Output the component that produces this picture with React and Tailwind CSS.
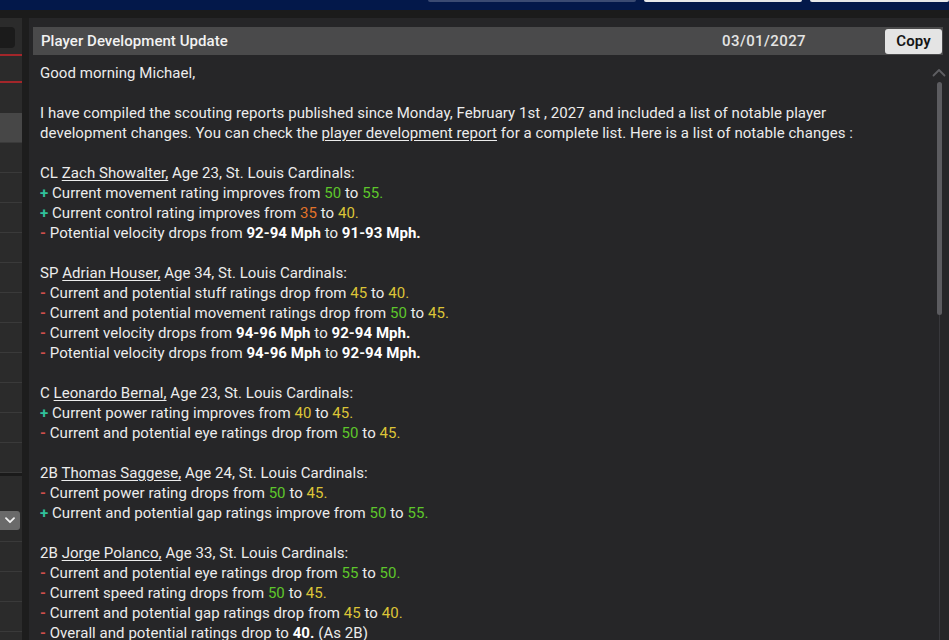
import React from "react";

const tone = {
  g: "text-[#5ec62b]",
  y: "text-[#dcc437]",
  o: "text-[#e2732a]",
};

const reports = [
  {
    pos: "CL",
    name: "Zach Showalter,",
    rest: " Age 23, St. Louis Cardinals:",
    lines: [
      { s: "+", t: "Current movement rating improves from", a: ["50", "g"], b: ["55.", "g"] },
      { s: "+", t: "Current control rating improves from", a: ["35", "o"], b: ["40.", "y"] },
      { s: "-", t: "Potential velocity drops from", bold: ["92-94 Mph", "91-93 Mph."] },
    ],
  },
  {
    pos: "SP",
    name: "Adrian Houser,",
    rest: " Age 34, St. Louis Cardinals:",
    lines: [
      { s: "-", t: "Current and potential stuff ratings drop from", a: ["45", "y"], b: ["40.", "y"] },
      { s: "-", t: "Current and potential movement ratings drop from", a: ["50", "g"], b: ["45.", "y"] },
      { s: "-", t: "Current velocity drops from", bold: ["94-96 Mph", "92-94 Mph."] },
      { s: "-", t: "Potential velocity drops from", bold: ["94-96 Mph", "92-94 Mph."] },
    ],
  },
  {
    pos: "C",
    name: "Leonardo Bernal,",
    rest: " Age 23, St. Louis Cardinals:",
    lines: [
      { s: "+", t: "Current power rating improves from", a: ["40", "y"], b: ["45.", "y"] },
      { s: "-", t: "Current and potential eye ratings drop from", a: ["50", "g"], b: ["45.", "y"] },
    ],
  },
  {
    pos: "2B",
    name: "Thomas Saggese,",
    rest: " Age 24, St. Louis Cardinals:",
    lines: [
      { s: "-", t: "Current power rating drops from", a: ["50", "g"], b: ["45.", "y"] },
      { s: "+", t: "Current and potential gap ratings improve from", a: ["50", "g"], b: ["55.", "g"] },
    ],
  },
  {
    pos: "2B",
    name: "Jorge Polanco,",
    rest: " Age 33, St. Louis Cardinals:",
    lines: [
      { s: "-", t: "Current and potential eye ratings drop from", a: ["55", "g"], b: ["50.", "g"] },
      { s: "-", t: "Current speed rating drops from", a: ["50", "g"], b: ["45.", "y"] },
      { s: "-", t: "Current and potential gap ratings drop from", a: ["45", "y"], b: ["40.", "y"] },
      { s: "-", t: "Overall and potential ratings drop to", last: "40.", tail: " (As 2B)" },
    ],
  },
];

function ChangeLine({ line }) {
  return (
    <div className="whitespace-nowrap">
      {line.s === "+" ? (
        <span className="text-[#30c09a] font-bold">+ </span>
      ) : (
        <span className="text-[#cf4f4b] font-bold">- </span>
      )}
      {line.t}{" "}
      {line.a && (
        <>
          <span className={tone[line.a[1]]}>{line.a[0]}</span> to{" "}
          <span className={tone[line.b[1]]}>{line.b[0]}</span>
        </>
      )}
      {line.bold && (
        <>
          <span className="font-bold text-white">{line.bold[0]}</span> to{" "}
          <span className="font-bold text-white">{line.bold[1]}</span>
        </>
      )}
      {line.last && (
        <>
          <span className="font-bold text-white">{line.last}</span>
          {line.tail}
        </>
      )}
    </div>
  );
}

function Sidebar() {
  return (
    <div className="w-[22px] shrink-0 bg-[#2b2b2b] flex flex-col overflow-hidden">
      <div className="mt-[9px] h-[21px] w-[15px] shrink-0 rounded-r-[4px] bg-[#1b1b1b]" />
      <div className="mt-[6px] h-[2px] shrink-0 bg-[#a3262a]" />
      <div className="mt-[25px] h-[2px] shrink-0 bg-[#a3262a]" />
      <div className="mt-[30px] h-[30px] shrink-0 bg-[#474747] border-b border-[#3a3a3a]" />
      {[...Array(11)].map((_, i) => (
        <div key={i} className="h-[30px] shrink-0 border-b border-[#3a3a3a]" />
      ))}
      <div className="h-[3px] shrink-0 bg-[#1a1a1a]" />
      <div className="mt-[35px] h-[19px] w-[20px] shrink-0 rounded-r-[3px] bg-[#6a6a6a] flex items-center justify-center">
        <svg width="10" height="7" viewBox="0 0 10 7" fill="none">
          <path d="M1 1.2 L5 5.2 L9 1.2" stroke="#f2f2f2" strokeWidth="1.8" strokeLinecap="round" strokeLinejoin="round" />
        </svg>
      </div>
      {[...Array(4)].map((_, i) => (
        <div key={i} className={`h-[30px] shrink-0 border-t border-[#3a3a3a] ${i === 0 ? "mt-[11px]" : ""}`} />
      ))}
    </div>
  );
}

export default function App() {
  return (
    <div className="w-[949px] h-[640px] overflow-hidden flex flex-col bg-[#1b1b1b] font-['Roboto',sans-serif] text-[15px] leading-[20px] tracking-[0.05px] text-[#ececec]">
      <div className="h-[10px] shrink-0 bg-[#03184a] flex items-start">
        <div className="ml-[428px] w-[208px] h-[2px] rounded-b-[3px] bg-[#3a4a72]" />
        <div className="ml-[8px] w-[158px] h-[2px] rounded-b-[3px] bg-[#e8e8ea]" />
        <div className="ml-[8px] w-[139px] h-[2px] rounded-b-[3px] bg-[#e8e8ea]" />
      </div>

      <div className="flex-1 flex mt-[8px] min-h-0">
        <Sidebar />
        <div className="w-[7px] shrink-0 bg-[#1d1d1d]" />

        <div className="flex-1 bg-[#262628] flex flex-col pt-[9px] pl-[4px] pr-[6px] min-h-0">
          <div className="h-[28px] shrink-0 bg-[#4a4a4b] flex items-center pl-[8px] pr-[1px]">
            <span className="text-[#f2f2f2] font-medium">Player Development Update</span>
            <span className="ml-auto mr-[79px] text-[#e4e4e4] font-medium tracking-[0.4px]">03/01/2027</span>
            <button className="h-[25px] w-[57px] rounded-[3px] bg-[#e4e4e4] text-[#141414] font-semibold text-[15px]">
              Copy
            </button>
          </div>

          <div className="flex-1 flex min-h-0">
            <div className="flex-1 pl-[7px] pt-[8px] overflow-hidden">
              <div>Good morning Michael,</div>
              <div className="h-[20px]" />
              <div className="whitespace-nowrap">
                I have compiled the scouting reports published since Monday, February 1st , 2027 and included a list of notable player
                <br />
                development changes. You can check the{" "}
                <span className="underline underline-offset-2">player development report</span> for a complete list. Here is a list of
                notable changes :
              </div>
              {reports.map((r, i) => (
                <div key={i} className="mt-[20px]">
                  <div className="whitespace-nowrap">
                    {r.pos} <span className="underline underline-offset-2">{r.name}</span>
                    {r.rest}
                  </div>
                  {r.lines.map((l, j) => (
                    <ChangeLine key={j} line={l} />
                  ))}
                </div>
              ))}
            </div>

            <div className="w-[14px] shrink-0 -mr-[3px] flex flex-col items-center pt-[13px]">
              <svg width="14" height="9" viewBox="0 0 14 9" fill="none">
                <path d="M1.5 7.5 L7 2 L12.5 7.5" stroke="#5e5e62" strokeWidth="1.8" strokeLinecap="round" strokeLinejoin="round" />
              </svg>
              <div className="mt-[5px] w-[5px] h-[233px] shrink-0 rounded-full bg-[#5c5c60]" />
              <div className="w-[1px] flex-1 bg-[#38383c]" />
            </div>
          </div>
        </div>
      </div>
    </div>
  );
}
